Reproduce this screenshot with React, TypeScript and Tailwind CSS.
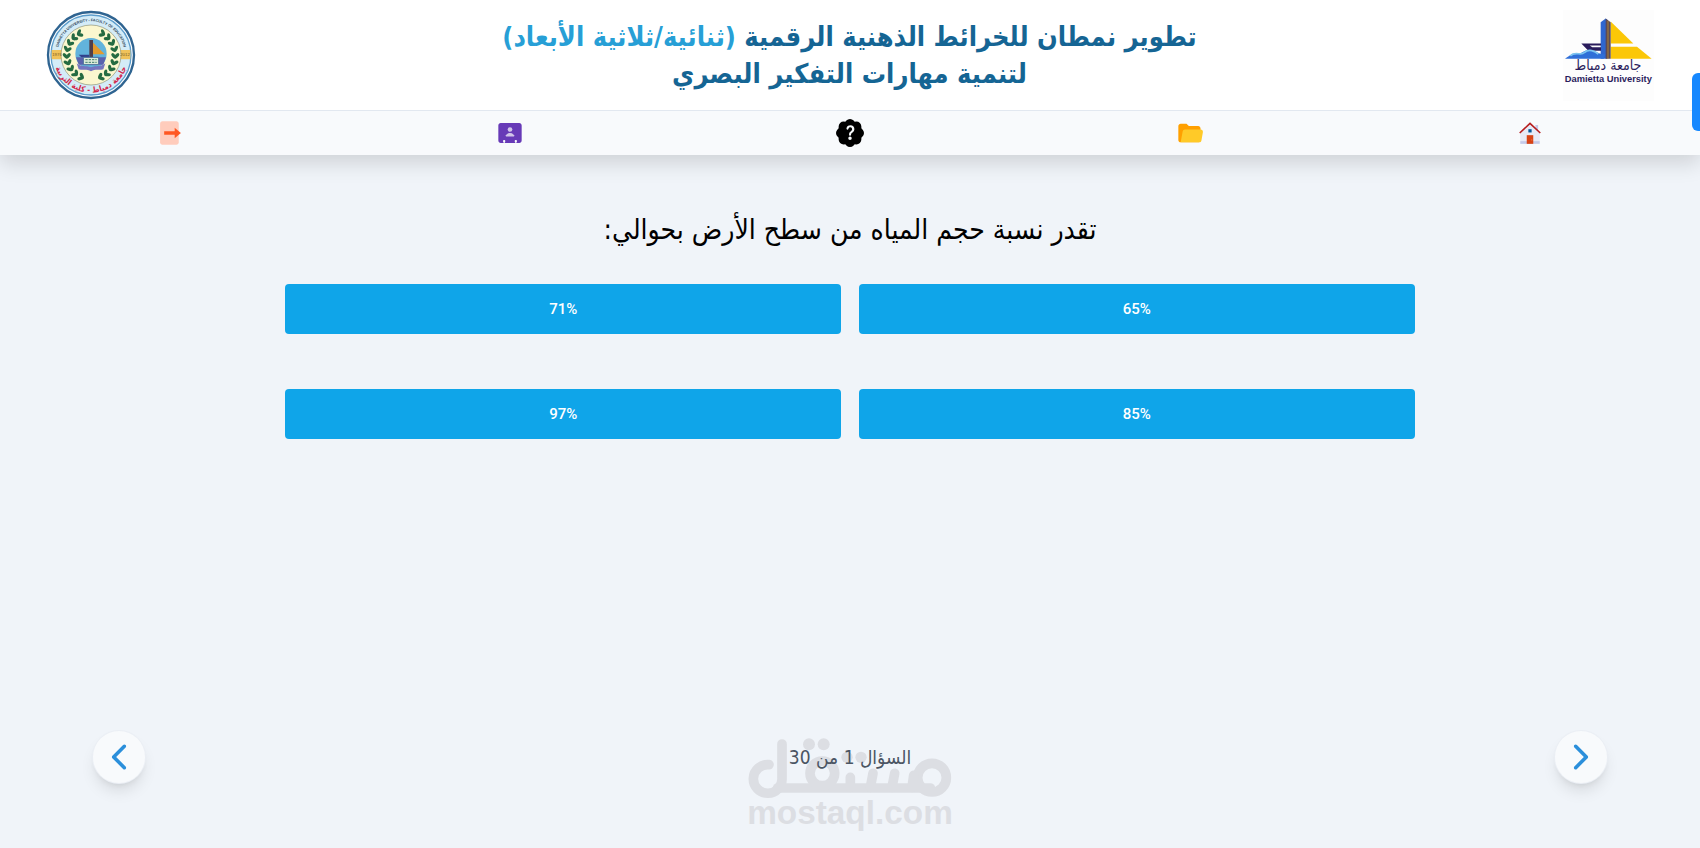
import React, { useState } from 'react';
import { FcHome, FcOpenedFolder, FcBusinessContact, FcExport } from 'react-icons/fc';
import { BsPatchQuestionFill } from 'react-icons/bs';
import { IoIosArrowBack, IoIosArrowForward } from 'react-icons/io';

const answers = ['65%', '71%', '85%', '97%'];

const navLinks = [
  { label: 'الرئيسية', icon: <FcHome size={26} /> },
  { label: 'المحتوى', icon: <FcOpenedFolder size={28} /> },
  { label: 'الأسئلة', icon: <BsPatchQuestionFill size={28} /> },
  { label: 'تواصل معنا', icon: <FcBusinessContact size={28} /> },
  { label: 'خروج', icon: <FcExport size={28} /> },
];

const laurelLeaves = [-62, -46, -30, -14, 2, 18, 34, 50, 66];

const UniversityLogo: React.FC = () => (
  <svg className="size-[91px] bg-[#fdfdfd]" viewBox="70 28 273 272" role="img" aria-label="Damietta University">
    <path d="M213 62L281 128H213Z" fill="#fbc707" />
    <path d="M213 138H292L336 174H213Z" fill="#fbc707" />
    <path d="M183 64L198 53L203 57V174H183Z" fill="#2f66cf" />
    <path d="M198 53L213 64V174H198Z" fill="#5b4a58" />
    <path d="M205 60V174" stroke="#d9a21d" strokeWidth="2" />
    <path d="M125 128H184V134H150L158 139H184V150H146Z" fill="#2a1c5c" />
    <path d="M76 174C92 162 100 157 113 158C126 160 132 148 150 147C166 147 178 164 197 160L192 174Z" fill="#2f6fd8" />
    <path d="M92 165C106 150 124 166 134 155C148 143 166 150 176 160" fill="none" stroke="#7cc4f0" strokeWidth="5" />
    <text x="205" y="209" textAnchor="middle" fontSize="42" fill="#2a1c5c" className="font-['DejaVu_Sans_Condensed',sans-serif]">
      جامعة دمياط
    </text>
    <text x="206" y="245" textAnchor="middle" fontSize="28" fontWeight="700" fill="#2a1c5c" className="font-['Liberation_Sans',sans-serif]">
      Damietta University
    </text>
  </svg>
);

const FacultyLogo: React.FC = () => (
  <svg className="size-[90px]" viewBox="0 0 270 270" role="img" aria-label="Faculty of Education">
    <defs>
      <path id="seal-top" d="M34 135A101 101 0 0 1 236 135" />
      <path id="seal-bottom" d="M22 135A113 113 0 0 0 248 135" />
    </defs>
    <circle cx="135" cy="135" r="129" fill="#fff" stroke="#2f6491" strokeWidth="7" />
    <circle cx="135" cy="135" r="120" fill="#d4ecf8" stroke="#5c9dcc" strokeWidth="4" />
    <path d="M17 120H48V148H17ZM222 120H253V148H222Z" fill="#f0c25a" />
    <circle cx="135" cy="135" r="90" fill="#fbf7cf" stroke="#8b8f74" strokeWidth="2" />
    <text fontSize="11" fontWeight="700" fill="#2b3f55" className="font-['Liberation_Sans',sans-serif]">
      <textPath href="#seal-top" startOffset="50%" textAnchor="middle">DAMIETTA UNIVERSITY - FACULTY OF EDUCATION</textPath>
    </text>
    <text fontSize="24" fontWeight="700" fill="#d3264a" direction="rtl" className="font-['DejaVu_Sans_Condensed',sans-serif]">
      <textPath href="#seal-bottom" startOffset="50%" textAnchor="middle">جامعة دمياط - كلية التربية</textPath>
    </text>
    <text x="33" y="139" textAnchor="middle" fontSize="13" fill="#7a5a1c" className="font-['Liberation_Sans',sans-serif]">1976</text>
    <text x="237" y="139" textAnchor="middle" fontSize="13" fill="#7a5a1c" className="font-['Liberation_Sans',sans-serif]">2012</text>
    {laurelLeaves.map(angle => (
      <g key={angle} fill="#256b42">
        <g transform={`rotate(${angle} 135 135)`}>
          <ellipse cx="212" cy="135" rx="10" ry="5" transform="rotate(-50 212 135)" />
          <ellipse cx="203" cy="135" rx="9" ry="5" transform="rotate(50 203 135)" />
        </g>
        <g transform={`rotate(${-angle} 135 135)`}>
          <ellipse cx="58" cy="135" rx="10" ry="5" transform="rotate(50 58 135)" />
          <ellipse cx="67" cy="135" rx="9" ry="5" transform="rotate(-50 67 135)" />
        </g>
      </g>
    ))}
    <circle cx="135" cy="131" r="47" fill="#62b3dc" />
    <path d="M90 142H180L172 164H98Z" fill="#5b62ad" />
    <path d="M140 97L176 133H140Z" fill="#e39b2d" />
    <path d="M130 90H141V142H130Z" fill="#503f4a" />
    <path d="M98 134H130V142H106Z" fill="#31418c" />
    <path d="M112 142H158V164H112Z" fill="#dcebd9" stroke="#4a6f9b" strokeWidth="3" />
    <path d="M118 149H152M118 157H152" stroke="#3f7d6a" strokeWidth="3" strokeDasharray="7 3" />
    <path d="M92 160C105 172 120 166 135 172C150 166 165 172 178 160L172 178C160 182 148 176 135 184C122 176 110 182 98 178Z" fill="#7675bf" />
  </svg>
);

const Watermark: React.FC = () => (
  <svg className="absolute bottom-[14px] left-1/2 -translate-x-1/2 w-[206px] h-[96px] pointer-events-none" viewBox="0 0 618 288" aria-hidden="true">
    <g fill="none" stroke="#dcdee3" strokeWidth="29" strokeLinecap="round" strokeLinejoin="round">
      <path d="M66 80A43 43 0 1 0 105 120V18" />
      <path d="M92 150H550" />
      <circle cx="555" cy="119" r="43" />
      <circle cx="226" cy="106" r="37" />
      <path d="M310 148V118M370 148L378 106M435 148L443 106M495 148L500 112" />
    </g>
    <g fill="#dcdee3">
      <circle cx="186" cy="19" r="18" />
      <circle cx="230" cy="19" r="18" />
      <circle cx="300" cy="58" r="17" />
      <circle cx="342" cy="58" r="17" />
    </g>
    <text x="309" y="258" textAnchor="middle" fontSize="100" fontWeight="700" fill="#dcdee3" className="font-['Liberation_Sans',sans-serif]">
      mostaql.com
    </text>
  </svg>
);

const arrowClass =
  'flex size-[54px] items-center justify-center rounded-full border border-slate-200/60 bg-slate-50 text-[#2b8fdb] shadow-lg';

const App: React.FC = () => {
  const [question, setQuestion] = useState(1);

  return (
    <div dir="rtl" className="relative flex min-h-screen flex-col overflow-hidden bg-[#f0f4f9] font-['DejaVu_Sans_Condensed','DejaVu_Sans',sans-serif]">
      {/* Header */}
      <header className="shadow-[0_8px_20px_rgba(0,0,0,0.14)]">
        <div className="flex h-[110px] items-center justify-between bg-white px-[46px]">
          <UniversityLogo />
          <h1 className="text-center text-[27px] leading-[37px] font-bold text-[#156594]">
            تطوير نمطان للخرائط الذهنية الرقمية <span className="text-[#279fd6]">(ثنائية/ثلاثية الأبعاد)</span>
            <br />
            لتنمية مهارات التفكير البصري
          </h1>
          <FacultyLogo />
        </div>
        <nav className="grid h-[45px] grid-cols-5 border-t border-slate-200 bg-slate-50">
          {navLinks.map(link => (
            <a key={link.label} href="#" aria-label={link.label} className="flex items-center justify-center text-black">
              {link.icon}
            </a>
          ))}
        </nav>
      </header>

      {/* Side tab */}
      <button aria-label="القائمة" className="absolute top-[73px] right-0 h-[58px] w-2 rounded-l-md bg-[#1688ff]" />

      {/* Question */}
      <main className="flex flex-1 flex-col items-center pt-[53px]">
        <h2 className="text-[28px] leading-[44px] text-black">تقدر نسبة حجم المياه من سطح الأرض بحوالي:</h2>
        <div className="mt-8 grid w-2/3 grid-cols-2 gap-x-[18px] gap-y-[55px] px-0.5">
          {answers.map(answer => (
            <button key={answer} dir="ltr" className="h-[50px] rounded bg-[#0fa5e9] font-['Roboto',sans-serif] text-[15px] font-medium text-white">
              {answer}
            </button>
          ))}
        </div>
      </main>

      {/* Pager */}
      <Watermark />
      <footer className="relative flex items-center justify-between px-[92px] pb-[64px]">
        <button aria-label="السابق" className={arrowClass} onClick={() => setQuestion(Math.max(1, question - 1))}>
          <IoIosArrowForward size={38} />
        </button>
        <p className="text-[19px] text-[#4b5563]">السؤال {question} من 30</p>
        <button aria-label="التالي" className={arrowClass} onClick={() => setQuestion(Math.min(30, question + 1))}>
          <IoIosArrowBack size={38} />
        </button>
      </footer>
    </div>
  );
};

export default App;
